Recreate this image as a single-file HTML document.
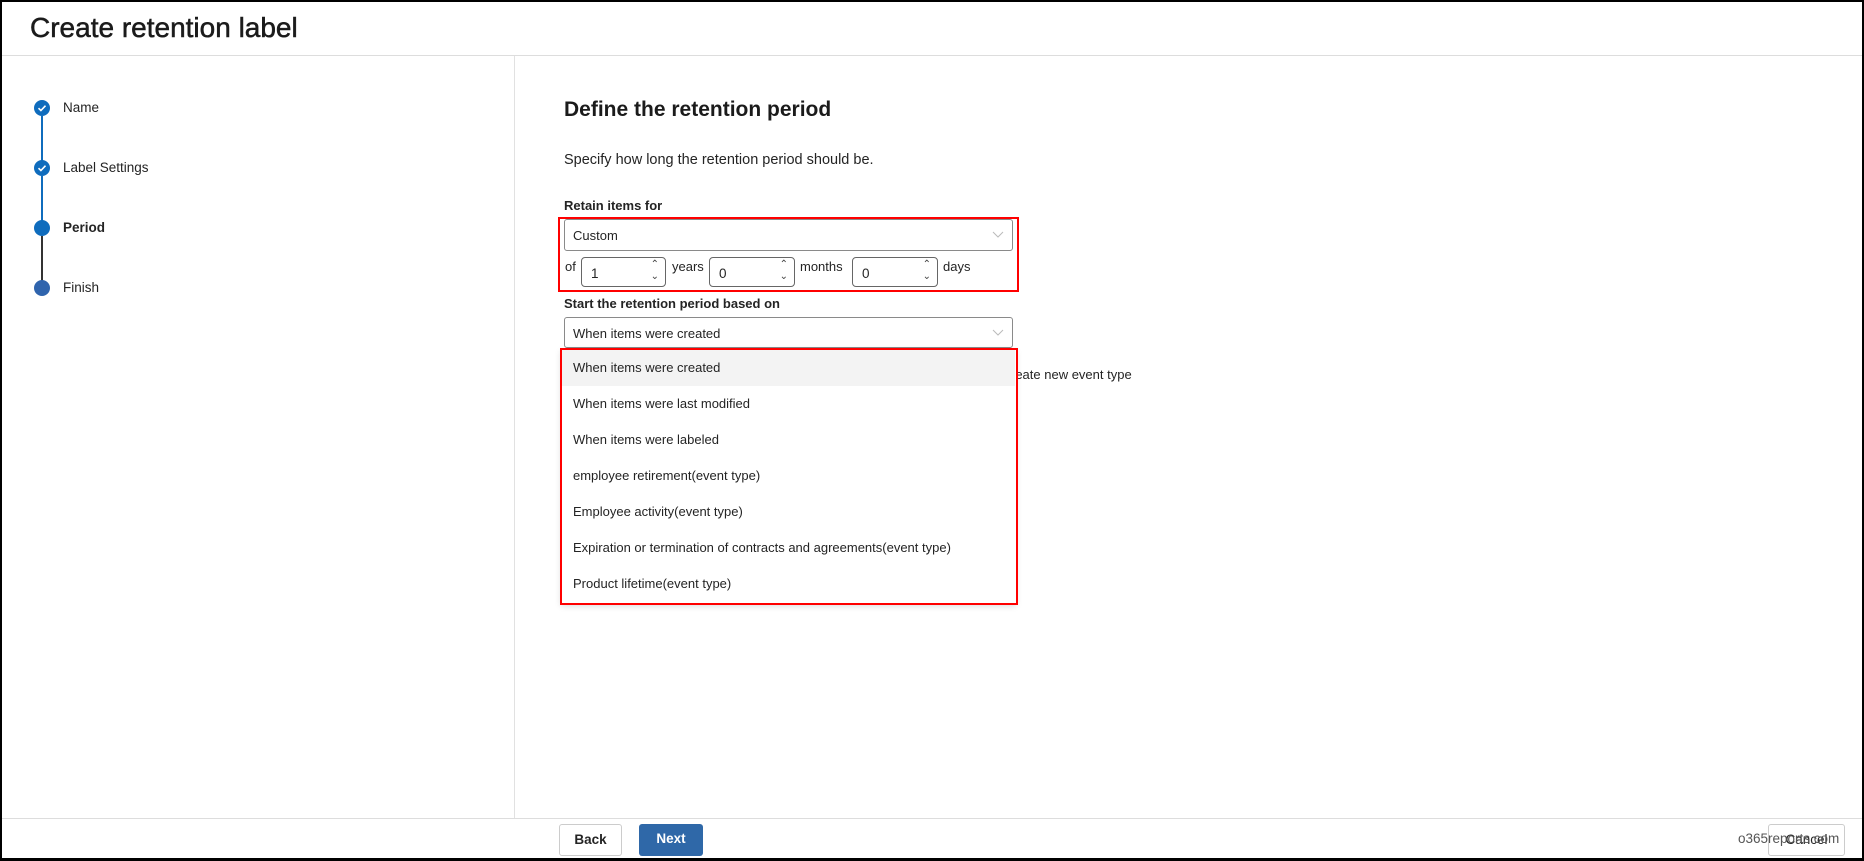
<!DOCTYPE html>
<html><head><style>
*{box-sizing:border-box;margin:0;padding:0}
body{width:1864px;height:861px;position:relative;overflow:hidden;background:#fff;font-family:"Liberation Sans",sans-serif;color:#242424}
.frame{position:absolute;left:0;top:0;width:1864px;height:861px;border:2px solid #000;border-bottom-width:3px}
.a{position:absolute;white-space:nowrap}
.circ{position:absolute;width:16px;height:16px;border-radius:50%;background:#0f6cbd;left:34px}
.line{position:absolute;left:41px;width:2px}
.t{font-size:13.5px;line-height:16px}
.sel{position:absolute;border:1px solid #8a8a8a;border-radius:3px;background:#fff}
.spin{position:absolute;top:257px;height:30px;border:1px solid #666;border-radius:4px;background:#fff}
.spin span{position:absolute;left:9px;top:8px;font-size:13.5px}
.spin i{position:absolute;right:6px;font-style:normal;font-size:10px;color:#444}
.item{position:absolute;left:561px;width:454px;height:36px;font-size:13px;line-height:36px;padding-left:12px}
.btn{position:absolute;top:824px;height:32px;border-radius:3px;font-size:13.5px;font-weight:bold;line-height:30px;text-align:center}
</style></head><body>
<div class="a" style="left:30px;top:12px;font-size:28px;font-weight:normal;color:#1b1b1b;-webkit-text-stroke:0.5px #1b1b1b">Create retention label</div>
<div class="a" style="left:0;top:55px;width:1864px;height:1px;background:#ddd"></div>
<div class="a" style="left:514px;top:56px;width:1px;height:762px;background:#e1e1e1"></div>
<div class="a" style="left:0;top:818px;width:1864px;height:1px;background:#ddd"></div>

<div class="line" style="top:116px;height:52px;background:#0f6cbd"></div>
<div class="line" style="top:176px;height:52px;background:#0f6cbd"></div>
<div class="line" style="top:236px;height:52px;background:#333"></div>
<div class="circ" style="top:100px"><svg width="16" height="16"><path d="M4.5 8.2l2.4 2.3 4.6-4.8" stroke="#fff" stroke-width="1.6" fill="none"/></svg></div>
<div class="circ" style="top:160px"><svg width="16" height="16"><path d="M4.5 8.2l2.4 2.3 4.6-4.8" stroke="#fff" stroke-width="1.6" fill="none"/></svg></div>
<div class="circ" style="top:220px"></div>
<div class="circ" style="top:280px;background:#2f64ad"></div>
<div class="a t" style="left:63px;top:100px">Name</div>
<div class="a t" style="left:63px;top:160px">Label Settings</div>
<div class="a t" style="left:63px;top:220px;font-weight:bold">Period</div>
<div class="a t" style="left:63px;top:280px">Finish</div>

<div class="a" style="left:564px;top:98px;font-size:21px;font-weight:bold;color:#1b1b1b">Define the retention period</div>
<div class="a" style="left:564px;top:152px;font-size:14.5px">Specify how long the retention period should be.</div>
<div class="a" style="left:564px;top:198px;font-size:13px;font-weight:bold">Retain items for</div>
<div class="sel" style="left:564px;top:219px;width:449px;height:32px"><span class="a" style="left:8px;top:8px;font-size:13px">Custom</span><svg class="a" style="right:8px;top:11px" width="12" height="8"><path d="M1 1l5 5 5-5" stroke="#bbb" fill="none"/></svg></div>
<div class="a" style="left:565px;top:259px;font-size:13px">of</div>
<div class="spin" style="left:581px;width:85px"><span>1</span><i style="top:1px">&#8963;</i><i style="top:13px">&#8964;</i></div>
<div class="a" style="left:672px;top:259px;font-size:13px">years</div>
<div class="spin" style="left:709px;width:86px"><span>0</span><i style="top:1px">&#8963;</i><i style="top:13px">&#8964;</i></div>
<div class="a" style="left:800px;top:259px;font-size:13px">months</div>
<div class="spin" style="left:852px;width:86px"><span>0</span><i style="top:1px">&#8963;</i><i style="top:13px">&#8964;</i></div>
<div class="a" style="left:943px;top:259px;font-size:13px">days</div>
<div class="a" style="left:558px;top:217px;width:461px;height:75px;border:2px solid #f00"></div>

<div class="a" style="left:564px;top:296px;font-size:13px;font-weight:bold">Start the retention period based on</div>
<div class="sel" style="left:564px;top:317px;width:449px;height:31px"><span class="a" style="left:8px;top:8px;font-size:13px">When items were created</span><svg class="a" style="right:8px;top:11px" width="12" height="8"><path d="M1 1l5 5 5-5" stroke="#bbb" fill="none"/></svg></div>
<div class="a" style="left:1011px;top:367px;font-size:13px">reate new event type</div>
<div class="a" style="left:561px;top:349px;width:455px;height:255px;background:#fff;box-shadow:0 2px 6px rgba(0,0,0,.15)"></div>
<div class="item" style="top:350px;background:#f3f3f3">When items were created</div>
<div class="item" style="top:386px">When items were last modified</div>
<div class="item" style="top:422px">When items were labeled</div>
<div class="item" style="top:458px">employee retirement(event type)</div>
<div class="item" style="top:494px">Employee activity(event type)</div>
<div class="item" style="top:530px">Expiration or termination of contracts and agreements(event type)</div>
<div class="item" style="top:566px">Product lifetime(event type)</div>
<div class="a" style="left:560px;top:348px;width:458px;height:257px;border:2px solid #f00"></div>

<div class="btn" style="left:559px;width:63px;border:1px solid #ccc">Back</div>
<div class="btn" style="left:639px;width:64px;background:#2f68a8;color:#fff">Next</div>
<div class="btn" style="left:1768px;width:77px;border:1px solid #ccc;font-weight:normal">Cancel</div>
<div class="a" style="left:1738px;top:831px;font-size:13.5px;color:#555">o365reports.com</div>
<div class="frame"></div>
</body></html>
